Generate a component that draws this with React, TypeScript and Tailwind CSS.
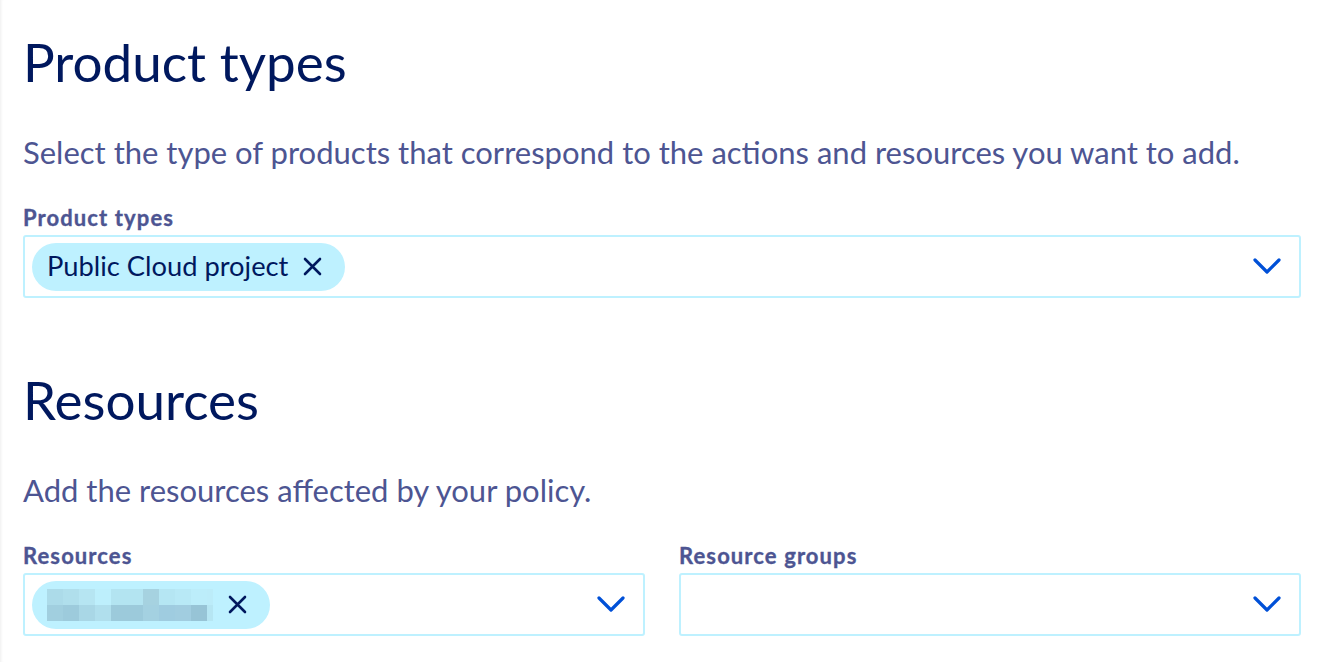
const mosaicTop = [
  'bg-[#acdbe9]',
  'bg-[#b0dfec]',
  'bg-[#b6e5f2]',
  'bg-[#bdeffc]',
  'bg-[#b3e4f1]',
  'bg-[#b3e4f1]',
  'bg-[#a6d2e0]',
  'bg-[#b5e6f3]',
  'bg-[#b8e9f6]',
  'bg-[#bcedfa]',
];
const mosaicBottom = [
  'bg-[#a1cfdf]',
  'bg-[#9dcbdc]',
  'bg-[#a9d7e6]',
  'bg-[#b0dfed]',
  'bg-[#9ccadb]',
  'bg-[#9ccadb]',
  'bg-[#a4d1e1]',
  'bg-[#9fcce0]',
  'bg-[#a1cde0]',
  'bg-[#97c4d6]',
];

function CloseIcon() {
  return (
    <svg width="19" height="19" viewBox="0 0 19 19" fill="none" className="shrink-0">
      <path d="M2 2L17 17M17 2L2 17" stroke="#00185e" strokeWidth="2.6" strokeLinecap="round" />
    </svg>
  );
}

function Chevron() {
  return (
    <svg width="28" height="17" viewBox="0 0 28 17" fill="none" className="shrink-0">
      <path d="M2 2L14 14L26 2" stroke="#0050d7" strokeWidth="3.2" strokeLinecap="round" strokeLinejoin="round" />
    </svg>
  );
}

function Chip({ children }: { children: React.ReactNode }) {
  return (
    <span className="inline-flex h-[48px] items-center rounded-full bg-[#bef1ff] pl-[15px] pr-[23px] text-[27.3px] text-[#00185e]">
      {children}
      <span className="ml-[15px] flex">
        <CloseIcon />
      </span>
    </span>
  );
}

function Blurred() {
  return (
    <span className="flex flex-col">
      <span className="flex">
        {mosaicTop.map((c, i) => (
          <span key={i} className={`h-[16px] w-[16px] ${c}`} />
        ))}
        <span className="h-[16px] w-[6px] bg-[#bcecf9]" />
      </span>
      <span className="flex">
        {mosaicBottom.map((c, i) => (
          <span key={i} className={`h-[16px] w-[16px] ${c}`} />
        ))}
        <span className="h-[16px] w-[6px] bg-[#b6e6f3]" />
      </span>
    </span>
  );
}

function SelectBox({ children }: { children?: React.ReactNode }) {
  return (
    <div className="mt-[4px] flex h-[63px] items-center justify-between rounded-[3px] border-2 border-[#bef1ff] pl-[7px] pr-[18px]">
      <div className="flex items-center">{children}</div>
      <Chevron />
    </div>
  );
}

function Label({ children }: { children: React.ReactNode }) {
  return (
    <div className="text-[22px] font-bold leading-[26px] tracking-[0.05em] text-[#4d5592] [-webkit-text-stroke:0.35px_#4d5592]">
      {children}
    </div>
  );
}

export default function App() {
  return (
    <div className="min-h-screen bg-white pl-[23px] pr-[27px] pt-[30px] font-[Lato,sans-serif] shadow-[inset_3px_0_3px_-2px_rgba(0,0,0,0.07)]">
      <section>
        <h1 className="text-[53px] font-normal leading-[64px] text-[#00185e]">Product types</h1>
        <p className="mt-[40px] text-[31px] leading-[37px] text-[#4d5592]">
          Select the type of products that correspond to the actions and resources you want to add.
        </p>
        <div className="mt-[34px]">
          <Label>Product types</Label>
          <SelectBox>
            <Chip>Public Cloud project</Chip>
          </SelectBox>
        </div>
      </section>

      <section className="mt-[70px]">
        <h1 className="text-[53px] font-normal leading-[64px] text-[#00185e]">Resources</h1>
        <p className="mt-[40px] text-[31px] leading-[37px] text-[#4d5592]">Add the resources affected by your policy.</p>
        <div className="mt-[34px] grid grid-cols-2 gap-[34px]">
          <div>
            <Label>Resources</Label>
            <SelectBox>
              <Chip>
                <Blurred />
              </Chip>
            </SelectBox>
          </div>
          <div>
            <Label>Resource groups</Label>
            <SelectBox />
          </div>
        </div>
      </section>
    </div>
  );
}
